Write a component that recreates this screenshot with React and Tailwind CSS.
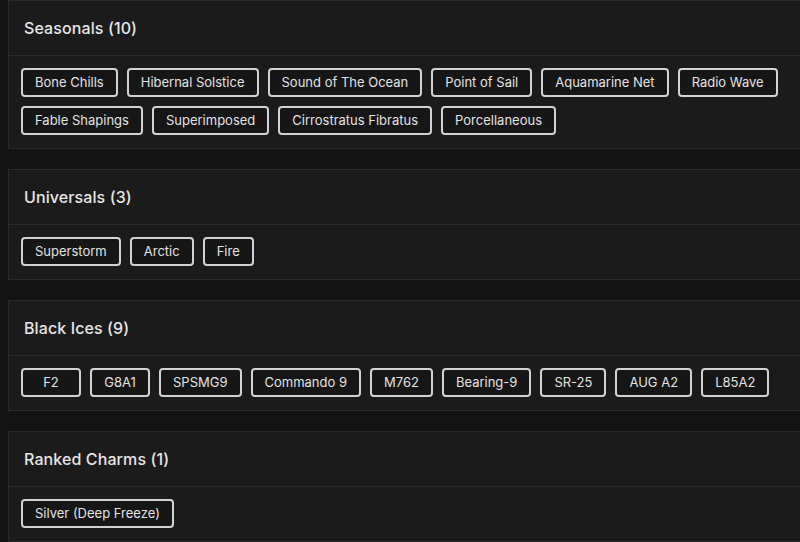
import React from 'react';

const sections = [
    {
        title: 'Seasonals',
        items: ['Bone Chills', 'Hibernal Solstice', 'Sound of The Ocean', 'Point of Sail', 'Aquamarine Net', 'Radio Wave', 'Fable Shapings', 'Superimposed', 'Cirrostratus Fibratus', 'Porcellaneous'],
    },
    {
        title: 'Universals',
        items: ['Superstorm', 'Arctic', 'Fire'],
    },
    {
        title: 'Black Ices',
        items: ['F2', 'G8A1', 'SPSMG9', 'Commando 9', 'M762', 'Bearing-9', 'SR-25', 'AUG A2', 'L85A2'],
        wide: true,
    },
    {
        title: 'Ranked Charms',
        items: ['Silver (Deep Freeze)'],
    },
];

function Section({ title, items, wide }) {
    return (
        <div className="bg-[#1b1b1b] border border-[#2a2a2a] mr-[-40px]">
            <div className="h-[55px] flex items-center px-[15px] border-b border-[#2b2b2b]">
                <h2 className="text-[16px] font-medium text-[#e6e6e6] tracking-[0.1px]">
                    {title} ({items.length})
                </h2>
            </div>
            <div className="flex flex-wrap gap-[9px] pt-3 pb-[13px] pl-3 pr-[20px]">
                {items.map((item) => (
                    <button
                        key={item}
                        className={`h-[29px] border-2 border-[#d2d2d2] rounded-[4px] bg-[#161616] text-[13px] text-[#e2e2e2] px-[12px] ${wide ? 'min-w-[60px]' : ''}`}
                    >
                        {item}
                    </button>
                ))}
            </div>
        </div>
    );
}

export default function App() {
    return (
        <div className="min-h-[542px] bg-[#131313] pl-2 overflow-hidden" style={{ fontFamily: 'Inter, "Noto Sans", sans-serif' }}>
            <div className="flex flex-col gap-5">
                {sections.map((s) => (
                    <Section key={s.title} {...s} />
                ))}
            </div>
        </div>
    );
}
